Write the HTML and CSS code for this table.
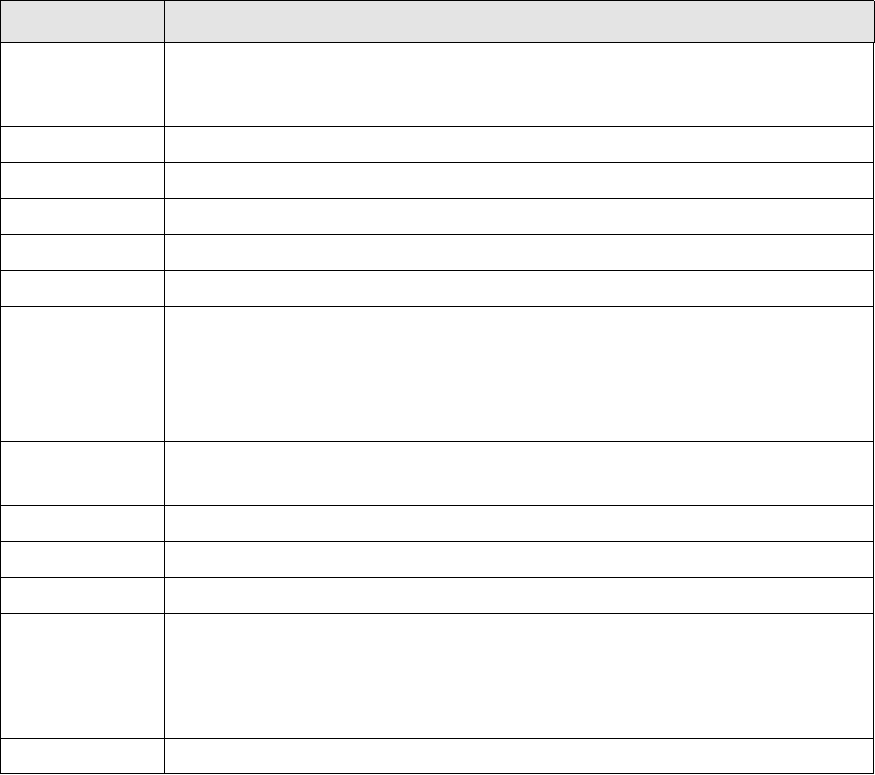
FILE: index.html
```html
<!DOCTYPE html>
<html>
<head>
<meta charset="utf-8">
<link rel="stylesheet" href="styles.css">
</head>
<body>
<div class="table">
  <div class="row head h42"><div class="cell"></div><div class="cell"></div></div>
  <div class="row h84"><div class="cell"></div><div class="cell"></div></div>
  <div class="row h36"><div class="cell"></div><div class="cell"></div></div>
  <div class="row h36"><div class="cell"></div><div class="cell"></div></div>
  <div class="row h36"><div class="cell"></div><div class="cell"></div></div>
  <div class="row h36"><div class="cell"></div><div class="cell"></div></div>
  <div class="row h36"><div class="cell"></div><div class="cell"></div></div>
  <div class="row h135"><div class="cell"></div><div class="cell"></div></div>
  <div class="row h64"><div class="cell"></div><div class="cell"></div></div>
  <div class="row h36"><div class="cell"></div><div class="cell"></div></div>
  <div class="row h36"><div class="cell"></div><div class="cell"></div></div>
  <div class="row h36"><div class="cell"></div><div class="cell"></div></div>
  <div class="row h125"><div class="cell"></div><div class="cell"></div></div>
  <div class="row h35"><div class="cell"></div><div class="cell"></div></div>
</div>
</body>
</html>
```
FILE: styles.css
```css
html, body { margin: 0; padding: 0; background: #fff; font-family: "Liberation Sans", Arial, sans-serif; }
.table {
  width: 874px;
  box-sizing: border-box;
  border-left: 1px solid #000;
  border-top: 1px solid #000;
  display: flex;
  flex-direction: column;
}
.row {
  display: grid;
  grid-template-columns: 164px 1fr;
}
.row.head { background: #e4e4e4; margin-right: -1px; }
.cell {
  box-sizing: border-box;
  border-right: 1px solid #000;
  border-bottom: 1px solid #000;
}
.h42 { height: 42px; }
.h84 { height: 84px; }
.h36 { height: 36px; }
.h35 { height: 35px; }
.h135 { height: 135px; }
.h64 { height: 64px; }
.h125 { height: 125px; }
```
